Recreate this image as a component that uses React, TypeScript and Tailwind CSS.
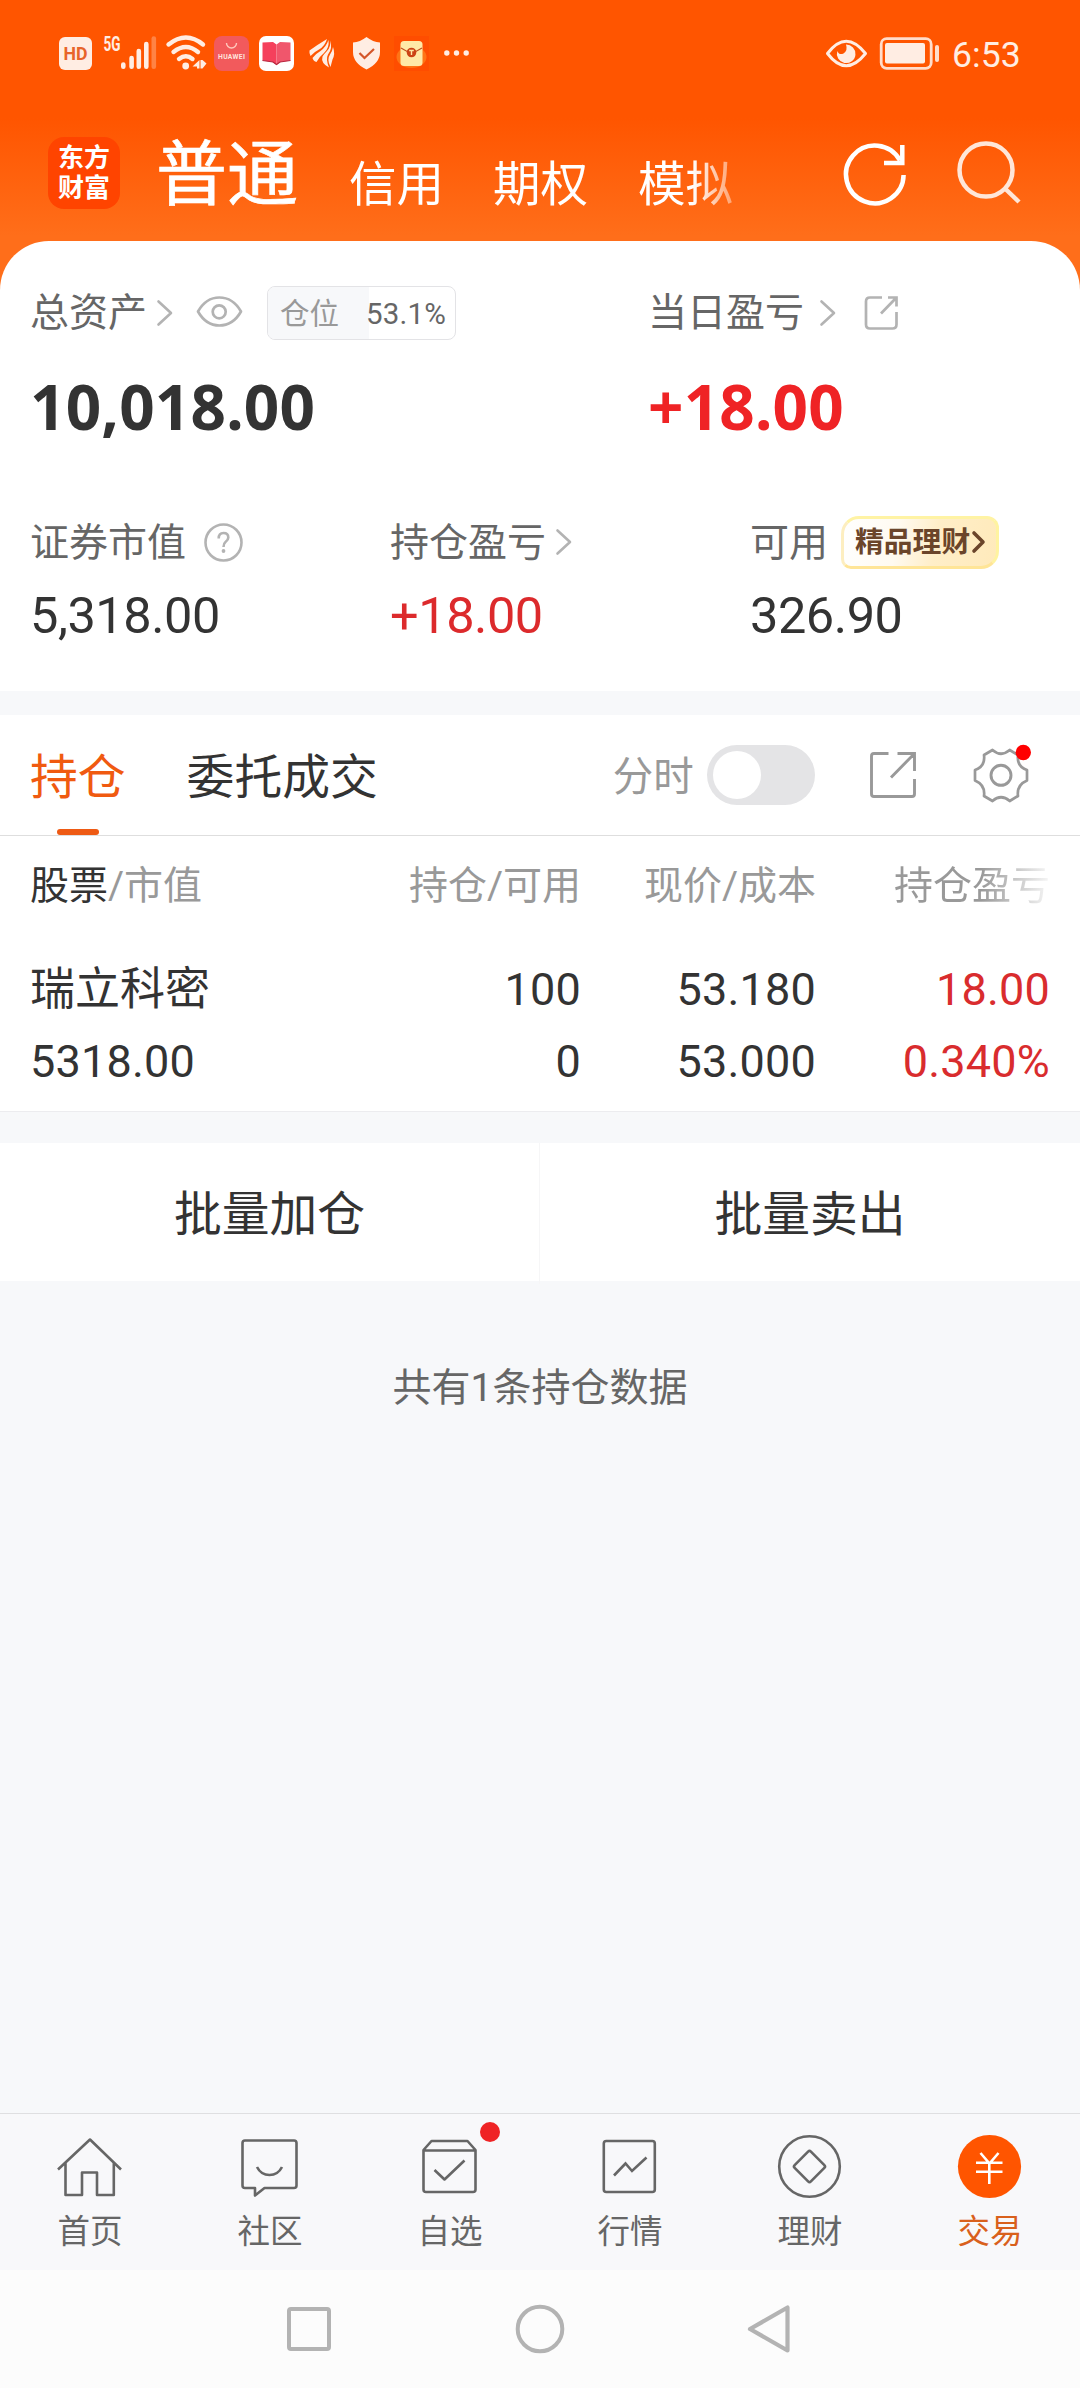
import type { ReactNode } from "react";

const FONT = "font-['Roboto','Noto_Sans_CJK_SC',sans-serif]";

function Svg({ box, className = "", children }: { box: string; className?: string; children: ReactNode }) {
  const [, , w, h] = box.split(" ");
  return (
    <svg width={w} height={h} viewBox={box} fill="none" className={`block shrink-0 overflow-visible ${className}`}>
      {children}
    </svg>
  );
}

function Chevron({ className = "" }: { className?: string }) {
  return (
    <Svg box="0 0 16 26" className={className}>
      <path d="M1.5 1.5L14 13L1.5 24.5" stroke="#b3b3b3" strokeWidth="2.6" strokeLinejoin="round" strokeLinecap="round" />
    </Svg>
  );
}

function StatusBar() {
  return (
    <div className="flex h-[108px] items-start pt-[30px] text-[#ffede3]">
      <Svg box="57 30 46 42" className="ml-[57px]">
        <rect x="59" y="37" width="33" height="33" rx="6" fill="#ffede3" />
        <text x="75.5" y="60" textAnchor="middle" fontSize="19" fontWeight="700" textLength="24" lengthAdjust="spacingAndGlyphs" fill="#e8642a" className="font-['Roboto']">HD</text>
      </Svg>
      <Svg box="103 30 55 42">
        <text x="103.5" y="50.5" fontSize="20" fontWeight="700" textLength="17" lengthAdjust="spacingAndGlyphs" fill="#ffede3" className="font-['Roboto']">5G</text>
        <g stroke="#ffede3" strokeWidth="4.6" strokeLinecap="round">
          <path d="M123.3 64.5V66.7M131.6 58V66.7M138.8 51V66.7M146.3 44V66.7" />
          <path d="M153.8 38.5V66.7" opacity="0.3" />
        </g>
      </Svg>
      <Svg box="158 30 56 42">
        <g stroke="#ffede3" strokeWidth="4.4" strokeLinecap="round">
          <path d="M168.5 44.5Q186 30.5 203 44.5" />
          <path d="M173.5 52Q186 42 198 52" />
          <path d="M179 59Q186 53.5 192.5 59" />
        </g>
        <circle cx="185.7" cy="66" r="3.4" fill="#ffede3" />
        <path d="M199.5 60V68.5H197V66.5H192.5ZM200.5 60H202.5L206.5 63.5L202.5 68.5H200.5Z" fill="#ffede3" />
      </Svg>
      <Svg box="214 30 45 42">
        <rect x="214" y="36" width="35" height="35" rx="8" fill="#f25a5c" />
        <path d="M226.5 43a5 5 0 0 0 10 0" stroke="#ffc9bd" strokeWidth="1.4" />
        <text x="231.5" y="59" textAnchor="middle" fontSize="6.8" fontWeight="700" textLength="27" fill="#ffe3dc" className="font-['Roboto']">HUAWEI</text>
      </Svg>
      <Svg box="259 30 48 42">
        <rect x="259" y="36" width="35" height="35" rx="7" fill="#fff" />
        <path d="M262.500 42.500L273 42L276.500 44.500V65L272.500 62L262.500 60.500Z" fill="#f5405c" />
        <path d="M290.500 42.500L280 42L276.500 44.500V65L280.500 62L290.500 60.500Z" fill="#f0566c" />
        <path d="M262.500 60.500L273 62L276.500 64.500L280 62L290.500 60.500" stroke="#b8283f" strokeWidth="1.2" />
      </Svg>
      <Svg box="307 30 44 42">
        <g fill="#ffede3">
          <path d="M309.500 50.500Q317 45 327 39Q325 46 319 49.500Q314 52 310.500 56Q309 53.500 309.500 50.500Z" />
          <path d="M312.500 58Q316 53.500 320.500 51Q326 47 328.500 40Q329.500 48 324 53Q319 57 316.500 62Q313.500 61.500 312.500 58Z" />
          <path d="M330 40.500Q333 48 328 54.500Q325.500 59 329 67.500Q320.500 63 322.500 56.500Q324 54 327 51Q331 47 330 40.500Z" />
          <path d="M333 47Q335.500 54 332.500 59.500L330.500 67Q326.500 59.500 330 54.500Q332.500 51 333 47Z" />
        </g>
      </Svg>
      <Svg box="351 30 43 42">
        <path d="M366.500 37Q373 42 380 42.500V52Q380 63 366.500 69.500Q353 63 353 52V42.500Q360 42 366.500 37Z" fill="#ffede3" />
        <path d="M359.500 53L364.500 58L374 49" stroke="#d4562a" strokeWidth="2.2" />
      </Svg>
      <Svg box="394 30 49 42">
        <rect x="394" y="36" width="35" height="35" fill="#ff4d00" />
        <ellipse cx="411.500" cy="57" rx="15" ry="11" fill="#ff7415" />
        <rect x="400.500" y="41" width="22" height="25" rx="3.500" fill="#ffe9a6" />
        <path d="M401 48L408 52H415L422 48" stroke="#c0501f" strokeWidth="1.200" />
        <circle cx="411.500" cy="52.500" r="4.800" fill="#cc4315" />
        <path d="M409.200 50.500H413.800M411.500 50.500V55" stroke="#ffe9a6" strokeWidth="1.400" />
      </Svg>
      <Svg box="443 30 27 42">
        <g fill="#ffede3">
          <circle cx="446.800" cy="53" r="2.700" />
          <circle cx="456.500" cy="53" r="2.700" />
          <circle cx="466.200" cy="53" r="2.700" />
        </g>
      </Svg>
      <Svg box="826 30 46 42" className="ml-auto">
        <path d="M829.500 53.500Q848 29 867.500 53.500Q848 78 829.500 53.500Z" stroke="#ffede3" strokeWidth="3" strokeLinejoin="round" />
        <path d="M848 44.500A9.300 9.300 0 1 1 839.300 51Q841 55.500 845.500 53.500Q850 50.500 848 44.500Z" fill="#ffede3" />
      </Svg>
      <Svg box="880 30 64 42" className="ml-2">
        <rect x="883.200" y="38.700" width="50" height="29.600" rx="5.500" stroke="#ffdccb" strokeWidth="2.800" />
        <rect x="887" y="43" width="40" height="20.500" rx="2" fill="#ffede3" />
        <path d="M939 47V60" stroke="#ffdccb" strokeWidth="4" strokeLinecap="round" />
      </Svg>
      <span className="mt-[4px] mr-[61px] ml-[10px] w-[67px] text-[35.500px] leading-[42px] tracking-[0.100px]">6:53</span>
    </div>
  );
}

function Header() {
  return (
    <div className="flex h-[133px] text-white">
      <div className="mt-[29px] ml-[48px] flex h-[72px] w-[72px] flex-col items-center justify-center rounded-[16px] bg-[#ff4400] text-[26px] leading-[30px] font-bold">
        <span>东方</span>
        <span>财富</span>
      </div>
      <nav className="flex w-[640px] [mask-image:linear-gradient(to_right,#000_572px,transparent_640px)]">
        <span className="ml-[36px] h-[90px] w-[144px] pt-[22px] text-[71px] leading-[90px] [-webkit-text-stroke:0.700px_white]">普通</span>
        <span className="ml-[49px] pt-[32px] text-[47.500px] leading-[90px]">信用</span>
        <span className="ml-[49px] pt-[32px] text-[47.500px] leading-[90px]">期权</span>
        <span className="ml-[50px] pt-[32px] text-[47.500px] leading-[90px]">模拟</span>
      </nav>
      <Svg box="843 140 68 68" className="mt-[32px] ml-[82px]">
        <path d="M904.600 175A28.800 28.800 0 1 1 901 160.500" stroke="#fff" strokeWidth="4.500" />
        <path d="M885 163H903.300V145" stroke="#fff" strokeWidth="4.500" />
      </Svg>
      <Svg box="955 138 68 68" className="mt-[30px] ml-[44px]">
        <circle cx="987" cy="170" r="26.500" stroke="#ffe6d8" strokeWidth="4.500" />
        <path d="M1006 188.500L1020 202" stroke="#ffe6d8" strokeWidth="4.500" />
      </Svg>
    </div>
  );
}

function Summary() {
  return (
    <section className="h-[450px] rounded-t-[49px] bg-white pt-[40px] pl-[30px] text-[39px] text-[#666]">
      <div className="grid grid-cols-[618px_1fr]">
        <div className="flex h-[60px] items-center leading-[60px]">
          <span className="pt-[3px]">总资产</span>
          <Chevron className="ml-[10px] mt-[3px]" />
          <Svg box="195 294 50 36" className="ml-[22px] mt-[2px]">
            <path d="M198 311.500Q206 297.500 219.300 297.500Q233 297.500 241 311.500Q233 325.500 219.300 325.500Q206 325.500 198 311.500Z" stroke="#b3b3b3" strokeWidth="2.700" strokeLinejoin="round" />
            <circle cx="219.200" cy="311.800" r="6.500" stroke="#b3b3b3" strokeWidth="2.700" />
          </Svg>
          <div className="mt-[4px] ml-[22px] flex h-[54px] w-[189px] items-center overflow-hidden rounded-[8px] border border-[#e3e3e6] text-[29.500px] leading-[52px]">
            <span className="h-full w-[101px] bg-[#f7f8fa] pt-px pl-[12px] text-[#999]">仓位</span>
            <span className="-ml-[3px] pt-px tracking-[0.200px]">53.1%</span>
          </div>
        </div>
        <div className="flex h-[60px] items-center leading-[60px]">
          <span className="pt-[3px]">当日盈亏</span>
          <Chevron className="ml-[16px] mt-[3px]" />
          <Svg box="864 294 36 38" className="ml-[27px] mt-[4px]">
            <path d="M883 297.500H871Q867 297.500 867 301.500V324.500Q867 328.500 871 328.500H893.500Q897.500 328.500 897.500 324.500V312M889 297.500H897.500V306.500M897 298L882 313.500" stroke="#b3b3b3" strokeWidth="2.700" />
          </Svg>
        </div>
      </div>
      <div className="mt-[35px] grid grid-cols-[618px_1fr] font-['Noto_Sans'] text-[62px] leading-[60px] font-bold tracking-[0.200px]">
        <span className="text-[#333]">10,018.00</span>
        <span className="text-[#ef2325]">+18.00</span>
      </div>
      <div className="mt-[76px] grid grid-cols-[360px_360px_1fr]">
        <div className="flex h-[60px] items-center leading-[60px]">
          <span className="pt-[2px]">证券市值</span>
          <Svg box="203 522 42 42" className="ml-[17px] mt-[2px]">
            <circle cx="223.500" cy="542.500" r="18" stroke="#b3b3b3" strokeWidth="2.600" />
            <path d="M218.700 538.500Q218.700 533 223.500 533Q228.300 533 228.300 537.500Q228.300 540 225.500 542Q223.500 543.500 223.500 547" stroke="#b3b3b3" strokeWidth="2.600" />
            <circle cx="223.500" cy="551" r="1.900" fill="#b3b3b3" />
          </Svg>
        </div>
        <div className="flex h-[60px] items-center leading-[60px]">
          <span className="pt-[2px]">持仓盈亏</span>
          <Chevron className="ml-[10px]" />
        </div>
        <div className="flex h-[60px] items-center leading-[60px]">
          <span className="pt-[2px]">可用</span>
          <div className="ml-[13px] flex h-[53px] w-[158px] items-center rounded-tl-[18px] rounded-tr-[12px] rounded-br-[18px] rounded-bl-[10px] border-[3px] border-t-[#fff3a4] border-r-[#fff3a0] border-b-[#ffe597] border-l-[#fdeec0] bg-[linear-gradient(100deg,#fff_0%,#fffaf0_35%,#ffeec8_60%,#ffeabb_100%)] pl-[11px] text-[28.800px] font-bold text-[#6b452a]">
            <span>精品理财</span>
            <Svg box="0 0 14 22" className="ml-[2px]">
              <path d="M2 2L11 11L2 20" stroke="#6b452a" strokeWidth="3.600" strokeLinecap="round" strokeLinejoin="round" />
            </Svg>
          </div>
        </div>
      </div>
      <div className="mt-[14px] grid grid-cols-[360px_360px_1fr] text-[50.500px] leading-[60px] tracking-[-0.450px] text-[#333]">
        <span>5,318.00</span>
        <span className="text-[#dc2a2c]">+18.00</span>
        <span>326.90</span>
      </div>
    </section>
  );
}

function Tabs() {
  return (
    <div className="flex h-[121px] border-b border-[#dedede] bg-white pl-[30px] text-[47.800px] leading-[120px]">
      <div className="relative text-[#f05a10]">
        <span className="block pt-[3px]">持仓</span>
        <i className="absolute bottom-0 left-[27px] h-[6px] w-[42px] rounded-full bg-[#ee5a14]" />
      </div>
      <span className="ml-[61px] pt-[3px] text-[#333]">委托成交</span>
      <span className="ml-[235px] pt-[2px] text-[40.500px] text-[#999]">分时</span>
      <div className="mt-[30px] ml-[13px] h-[60px] w-[108px] rounded-full bg-[#e4e4e6] p-[6px]">
        <div className="h-[48px] w-[48px] rounded-full bg-white" />
      </div>
      <Svg box="869 750 50 50" className="mt-[35px] ml-[53px]">
        <path d="M889.500 753.500H875Q872.500 753.500 872.500 756V794Q872.500 796.500 875 796.500H913Q915.500 796.500 915.500 794V779M898.500 753.500H915.500V771M915 754L892 777.500" stroke="#999" strokeWidth="2.900" />
      </Svg>
      <Svg box="972 743 64 64" className="mt-[28px] ml-[53px]">
        <path d="M993.500 750Q1002 757.500 1010.700 750L1019 755Q1017.500 766.500 1028 770V780.500Q1017.500 785 1019 796L1010.700 801Q1002 793.500 993.500 801L985 796Q986.500 785 976 780.500V770Q986.500 766.500 985 755Z" stroke="#999" strokeWidth="2.700" strokeLinejoin="round" />
        <circle cx="1002" cy="775.300" r="10" stroke="#999" strokeWidth="2.900" />
        <circle cx="1024.300" cy="752.500" r="7.700" fill="#f00" />
      </Svg>
    </div>
  );
}

function Holdings() {
  return (
    <section className="h-[276px] border-b border-[#ececef] bg-white px-[30px] pt-[20px]">
      <div className="grid grid-cols-[300px_251px_235px_234px] text-right text-[39px] leading-[60px] text-[#999]">
        <span className="text-left"><b className="font-normal text-[#333]">股票</b>/市值</span>
        <span>持仓/可用</span>
        <span>现价/成本</span>
        <span className="bg-[linear-gradient(to_right,#999_165px,#f4f4f4_232px)] bg-clip-text text-transparent">持仓盈亏</span>
      </div>
      <div className="mt-[44px] grid grid-cols-[300px_251px_235px_234px] gap-y-[12px] text-right text-[45px] leading-[60px] tracking-[0.200px] text-[#333]">
        <span className="text-left text-[45px] tracking-normal">瑞立科密</span>
        <span>100</span>
        <span>53.180</span>
        <span className="text-[#d92c2e]">18.00</span>
        <span className="text-left">5318.00</span>
        <span>0</span>
        <span>53.000</span>
        <span className="text-[#d92c2e]">0.340%</span>
      </div>
    </section>
  );
}

function NavItem({ label, children, active = false }: { label: string; children: ReactNode; active?: boolean }) {
  return (
    <div className={`flex flex-col items-center pt-[18px] ${active ? "text-[#d9601c]" : "text-[#666]"}`}>
      {children}
      <span className="mt-[5px] text-[32.500px] leading-[50px]">{label}</span>
    </div>
  );
}

function BottomNav() {
  return (
    <nav className="grid h-[157px] grid-cols-6 border-t border-[#dfdfe1] bg-[#f8f8fa]">
      <NavItem label="首页">
        <Svg box="55 2132 70 70">
          <path d="M58 2169.500L90 2139.500L121 2169.500M65.500 2163V2195H82V2172.500H97V2195H113.800V2163" stroke="#666" strokeWidth="2.600" strokeLinejoin="round" />
        </Svg>
      </NavItem>
      <NavItem label="社区">
        <Svg box="235 2132 70 70">
          <path d="M245 2140.500H294Q296.500 2140.500 296.500 2143V2185.500Q296.500 2188 294 2188H264.500L255 2195.500V2188H245Q242.500 2188 242.500 2185.500V2143Q242.500 2140.500 245 2140.500Z" stroke="#666" strokeWidth="2.600" strokeLinejoin="round" />
          <path d="M257 2167Q261 2175 269.500 2175Q278 2175 282 2167" stroke="#666" strokeWidth="2.600" />
        </Svg>
      </NavItem>
      <NavItem label="自选">
        <div className="relative">
          <Svg box="415 2132 70 70">
            <path d="M423.500 2150L431.500 2141H467.500L475.500 2150V2189.500Q475.500 2192 473 2192H426Q423.500 2192 423.500 2189.500ZM423.500 2150.500H475.500M434.500 2170L444.500 2179.500L464.500 2160.500" stroke="#666" strokeWidth="2.600" strokeLinejoin="round" />
          </Svg>
          <i className="absolute -top-[10px] left-[65px] h-[20px] w-[20px] rounded-full bg-[#ef2325]" />
        </div>
      </NavItem>
      <NavItem label="行情">
        <Svg box="595 2132 70 70">
          <rect x="603.800" y="2141" width="51" height="51" rx="2.500" stroke="#666" strokeWidth="2.600" />
          <path d="M614 2175.500L625.500 2163.500L632 2171L646.500 2157.500" stroke="#666" strokeWidth="2.600" />
        </Svg>
      </NavItem>
      <NavItem label="理财">
        <Svg box="775 2132 70 70">
          <circle cx="809.500" cy="2166.500" r="30.300" stroke="#666" strokeWidth="2.600" />
          <rect x="798" y="2155" width="23" height="23" rx="2" transform="rotate(45 809.500 2166.500)" stroke="#666" strokeWidth="2.600" />
        </Svg>
      </NavItem>
      <NavItem label="交易" active>
        <Svg box="955 2132 70 70">
          <circle cx="989.500" cy="2166.500" r="31.600" fill="#ff5500" />
          <path d="M980.500 2153L989.500 2163.500L998.500 2153M976 2162.800H1002.500M976 2171.800H1002.500M989.300 2163V2184" stroke="#fff" strokeWidth="2.600" />
        </Svg>
      </NavItem>
    </nav>
  );
}

function SystemNav() {
  return (
    <div className="flex h-[118px] items-center justify-center gap-[180px] bg-[#fcfcfc]">
      <Svg box="285 2304 50 50">
        <rect x="289" y="2309" width="40" height="40" rx="2" stroke="#b3b3b3" strokeWidth="4" />
      </Svg>
      <Svg box="515 2304 50 50">
        <circle cx="540" cy="2329" r="22.300" stroke="#b3b3b3" strokeWidth="4" />
      </Svg>
      <Svg box="745 2304 50 50">
        <path d="M787.500 2307.500V2350.500L750 2329Z" stroke="#b3b3b3" strokeWidth="4.200" strokeLinejoin="round" />
      </Svg>
    </div>
  );
}

export default function App() {
  return (
    <div className={`flex h-[2388px] w-[1080px] flex-col overflow-hidden whitespace-nowrap bg-[linear-gradient(#ff5500_0px,#ff5500_118px,#ff6e1a_236px,#ff6e1a_300px)] ${FONT}`}>
      <StatusBar />
      <Header />
      <Summary />
      <div className="h-[24px] bg-[#f7f8fa]" />
      <Tabs />
      <Holdings />
      <main className="flex-1 bg-[#f7f8fa] pt-[31px]">
        <div className="grid h-[138px] grid-cols-2 bg-white text-center text-[47.800px] leading-[138px] text-[#333]">
          <span className="border-r border-[#f6f6f7] pt-[3px]">批量加仓</span>
          <span className="pt-[3px]">批量卖出</span>
        </div>
        <p className="mt-[77px] text-center text-[39px] leading-[60px] text-[#666]">共有1条持仓数据</p>
      </main>
      <BottomNav />
      <SystemNav />
    </div>
  );
}
